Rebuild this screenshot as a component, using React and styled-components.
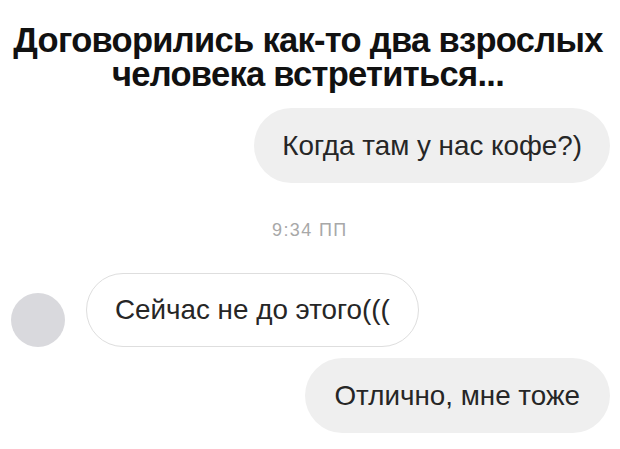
import React from 'react';
import styled, { createGlobalStyle } from 'styled-components';

const Global = createGlobalStyle`
  html, body {
    margin: 0;
    padding: 0;
    background: #fff;
  }
  body {
    font-family: "Liberation Sans", Arial, sans-serif;
  }
`;

const Page = styled.div`
  width: 620px;
  height: 449px;
  overflow: hidden;
  display: flex;
  flex-direction: column;
`;

const Title = styled.h1`
  margin: 0;
  padding: 23px 4px 0 0;
  font-size: 34.5px;
  line-height: 34px;
  font-weight: 700;
  text-align: center;
  color: #111;
  letter-spacing: -0.7px;
`;

const Chat = styled.div`
  display: flex;
  flex-direction: column;
  padding: 0 10px 0 11px;
  margin-top: 17px;
`;

const Row = styled.div`
  display: flex;
  align-items: flex-end;
  justify-content: ${({ $out }) => ($out ? 'flex-end' : 'flex-start')};
  gap: 21px;
  margin-top: ${({ $gap }) => $gap || 0}px;
`;

const Bubble = styled.div`
  height: ${({ $out }) => ($out ? 75 : 74)}px;
  box-sizing: border-box;
  display: flex;
  align-items: center;
  padding: 0 ${({ $wide }) => ($wide ? 30 : 28)}px;
  border-radius: 38px;
  font-size: 27.8px;
  color: #262626;
  background: ${({ $out }) => ($out ? '#efefef' : '#fff')};
  border: ${({ $out }) => ($out ? 'none' : '1px solid #dedede')};
`;

const Avatar = styled.div`
  width: 54px;
  height: 54px;
  border-radius: 50%;
  background: #d9d9dd;
  flex-shrink: 0;
`;

const Time = styled.div`
  margin-top: 37px;
  padding-left: 261px;
  font-size: 18px;
  letter-spacing: 1.4px;
  color: #a8a8a8;
  line-height: 20px;
`;

export default function App() {
  return (
    <Page>
      <Global />
      <Title>
        Договорились как-то два взрослых
        <br />
        человека встретиться...
      </Title>
      <Chat>
        <Row $out>
          <Bubble $out>Когда там у нас кофе?)</Bubble>
        </Row>
        <Time>9:34 ПП</Time>
        <Row $gap={33}>
          <Avatar />
          <Bubble>Сейчас не до этого(((</Bubble>
        </Row>
        <Row $out $gap={11}>
          <Bubble $out $wide>Отлично, мне тоже</Bubble>
        </Row>
      </Chat>
    </Page>
  );
}
